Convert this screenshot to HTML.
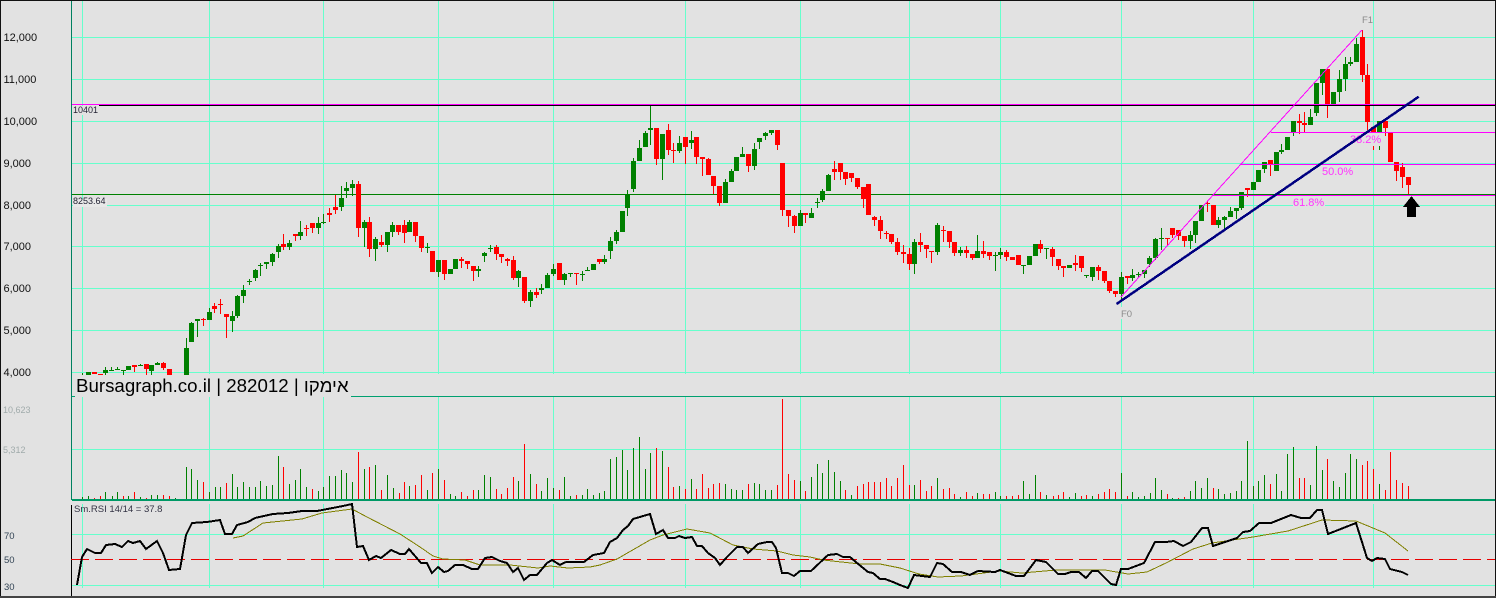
<!DOCTYPE html>
<html><head><meta charset="utf-8"><style>
html,body{margin:0;padding:0;background:#e2e2e2}
svg{display:block}
text{font-family:"Liberation Sans",sans-serif}
</style></head><body>
<svg width="1496" height="598" viewBox="0 0 1496 598" xmlns="http://www.w3.org/2000/svg" shape-rendering="crispEdges">
<defs><clipPath id="p"><rect x="72" y="0" width="1424" height="375"/></clipPath></defs>
<rect width="1496" height="598" fill="#e2e2e2"/>
<!-- grid -->
<path stroke="#66ffcc" stroke-width="1" fill="none" d="M72 37.5H1496M72 79.5H1496M72 121.5H1496M72 163.5H1496M72 205.5H1496M72 246.5H1496M72 288.5H1496M72 330.5H1496M72 372.5H1496M72 449.5H1496M72 534.5H1496M72 585.5H1496
M82.5 1V374M209.5 1V374M323.5 1V374M438.5 1V374M553.5 1V374M685.5 1V374M800.5 1V374M909.5 1V374M1000.5 1V374M1121.5 1V374M1253.5 1V374M1373.5 1V374
M82.5 397V499M209.5 397V499M323.5 397V499M438.5 397V499M553.5 397V499M685.5 397V499M800.5 397V499M909.5 397V499M1000.5 397V499M1121.5 397V499M1253.5 397V499M1373.5 397V499
M82.5 504V588M209.5 504V588M323.5 504V588M438.5 504V588M553.5 504V588M685.5 504V588M800.5 504V588M909.5 504V588M1000.5 504V588M1121.5 504V588M1253.5 504V588M1373.5 504V588"/>
<!-- frame/axes -->
<path stroke="#008060" stroke-width="1" fill="none" d="M71.5 0V500"/>
<path stroke="#000" stroke-width="1" fill="none" d="M71.5 505V596"/>
<path stroke="#00a070" stroke-width="1" fill="none" d="M351 396.5H1496M72 396.5H75"/>
<path stroke="#009966" stroke-width="2" fill="none" d="M72 500H1496"/>
<path stroke="#e80000" stroke-width="1" stroke-dasharray="18 6" fill="none" d="M71 559.5H1496"/>
<!-- green line -->
<path stroke="#008000" stroke-width="1" fill="none" d="M72 194.5H1496"/>
<g clip-path="url(#p)" fill="none">
<!-- green wicks -->
<path stroke="#008000" stroke-width="1" d="M82.5 373V375M105.5 367V375M111.5 367V371M117.5 367V370M123.5 370V375M140.5 364V366M151.5 365V375M157.5 362V365M186.5 338V375M191.5 322V342M197.5 319V337M209.5 308V320M232.5 311V332M237.5 295V318M243.5 285V303M249.5 279V285M255.5 269V281M260.5 263V276M266.5 262V269M272.5 253V266M278.5 244V258M289.5 240V250M300.5 221V240M318.5 217V234M323.5 214V224M341.5 186V211M346.5 182V198M352.5 180V196M364.5 220V247M375.5 237V261M387.5 232V252M392.5 222V237M409.5 220V232
M427.5 243V253M438.5 260V277M478.5 266V277M484.5 252V262M490.5 245V252M518.5 270V287M530.5 290V307M541.5 284V294M547.5 273V288M553.5 264V276M564.5 273V285M570.5 273V277M582.5 271V281M587.5 267V271M604.5 255V264M610.5 237V259M616.5 230V244M627.5 190V216M633.5 158V192M639.5 140V161M645.5 131V147M650.5 105V145M662.5 134V180M679.5 136V153M691.5 131V149M725.5 179V203M731.5 169V182M742.5 147V157M754.5 143V170M759.5 138V149M765.5 132V140M771.5 130V135M800.5 210V226M811.5 208V218M817.5 198V208
M822.5 189V202M828.5 174V191M914.5 239V274M937.5 223V255M960.5 247V256M977.5 235V258M995.5 252V271M1000.5 248V259M1023.5 265V274M1046.5 248V259M1086.5 275V278M1092.5 267V281M1121.5 272V300M1132.5 269V281M1138.5 272V278M1144.5 270V278M1149.5 256V267M1155.5 238V260M1161.5 228V250M1190.5 231V249M1195.5 221V243M1218.5 217V228M1224.5 216V229M1230.5 207V217M1236.5 208V219M1241.5 192V210M1264.5 162V173M1281.5 144V154M1293.5 121V136M1310.5 109V125M1316.5 83V116M1322.5 69V95M1339.5 70V102M1345.5 57V91M1350.5 57V66M1356.5 38V62M1379.5 121V150"/>
<!-- green bodies -->
<path stroke="#008000" stroke-width="5" d="M88.5 372V375M105.5 370V373M111.5 370V371M117.5 369V370M123.5 370V371M128.5 366V370M140.5 365V366M151.5 365V371M157.5 363V365M186.5 348V375M191.5 323V342M197.5 319V321M209.5 312V320M232.5 316V321M237.5 296V316M243.5 290V296M249.5 281V282M255.5 270V278M260.5 265V266M266.5 262V264M272.5 254V262M278.5 246V252M289.5 243V247M300.5 232V236M318.5 223V228M323.5 222V223M341.5 198V207M346.5 188V191M352.5 184V188M364.5 222V228M375.5 239V249M387.5 232V245M392.5 225V232M409.5 222V232
M427.5 247V248M438.5 260V272M450.5 269V274M455.5 259V269M478.5 269V271M484.5 253V256M490.5 248V249M518.5 271V278M530.5 292V301M541.5 288V290M547.5 275V288M553.5 269V274M564.5 274V280M570.5 273V274M582.5 274V275M587.5 270V271M593.5 264V270M604.5 259V262M610.5 241V251M616.5 232V241M622.5 211V232M627.5 194V208M633.5 161V189M639.5 148V161M645.5 133V147M650.5 128V130M662.5 134V159M679.5 143V151M691.5 140V143M725.5 182V203M731.5 171V182M736.5 157V171M742.5 154V157M754.5 149V166M759.5 138V142M765.5 133V136M771.5 130V133M800.5 213V226M811.5 213V218M817.5 202V203
M822.5 191V200M828.5 175V191M914.5 242V264M937.5 225V252M960.5 250V253M977.5 251V258M995.5 255V256M1000.5 252V255M1023.5 265V266M1029.5 256V265M1035.5 244V256M1046.5 248V249M1069.5 265V268M1086.5 275V276M1092.5 267V277M1121.5 277V294M1132.5 275V278M1138.5 274V275M1144.5 270V274M1149.5 258V264M1155.5 239V258M1161.5 238V239M1190.5 235V241M1195.5 221V235M1201.5 205V221M1218.5 220V225M1224.5 217V220M1230.5 211V217M1236.5 208V211M1241.5 192V208M1253.5 182V190M1258.5 170V182M1264.5 162V169M1276.5 152V171M1281.5 150V152M1287.5 137V150M1293.5 121V132M1310.5 117V125M1316.5 83V113M1322.5 69V83M1333.5 92V104M1339.5 79V92M1345.5 64V79M1350.5 62V64M1356.5 44V62M1379.5 121V132"/>
<!-- red wicks -->
<path stroke="#f00" stroke-width="1" d="M134.5 365V372M146.5 364V375M163.5 362V370M203.5 318V326M214.5 303V313M220.5 299V314M226.5 314V338M283.5 234V250M295.5 234V241M306.5 225V236M312.5 223V233M329.5 208V222M335.5 195V214M358.5 181V237M369.5 217V257M381.5 235V247M398.5 225V235M404.5 220V243M415.5 222V242M421.5 236V252
M444.5 260V280M461.5 257V268M467.5 261V269M473.5 266V281M496.5 245V260M501.5 254V263M507.5 258V266M513.5 256V280M524.5 277V303M536.5 288V298M570.5 273V273M576.5 273V285M599.5 259V264M656.5 128V165M668.5 124V155M673.5 143V163M685.5 137V164M696.5 137V164M702.5 157V176M708.5 158V175M713.5 176V194M719.5 186V206M748.5 154V172M777.5 130V150M782.5 163V216M788.5 210V227M794.5 215V233M805.5 213V223
M834.5 161V180M840.5 163V180M845.5 172V185M851.5 173V182M857.5 178V189M863.5 187V208M874.5 216V226M880.5 216V239M886.5 231V239M891.5 234V244M897.5 238V255M903.5 245V263M909.5 248V270M920.5 233V252M926.5 245V258M931.5 251V263M943.5 226V242M949.5 231V248M954.5 242V256M966.5 246V258M972.5 254V260M983.5 241V258M989.5 252V260M1006.5 250V261M1040.5 240V253M1052.5 247V266M1058.5 259V270M1063.5 266V277M1075.5 255V271M1081.5 256V272M1098.5 265V280M1104.5 271V283M1109.5 281V293M1115.5 291V297M1127.5 276V284M1167.5 238V245M1172.5 228V238M1178.5 230V240M1184.5 236V247M1207.5 201V212M1247.5 188V197M1270.5 160V176M1299.5 114V134M1304.5 112V132M1327.5 69V118M1362.5 30V82M1367.5 64V130M1373.5 127V150M1385.5 121V136M1396.5 162V181M1402.5 163V188M1408.5 177V194"/>
<!-- red bodies -->
<path stroke="#f00" stroke-width="5" d="M94.5 372V374M100.5 374V375M134.5 365V367M146.5 364V369M163.5 363V368M169.5 369V375M203.5 319V320M214.5 306V309M220.5 304V305M226.5 314V317M283.5 244V247M295.5 234V236M306.5 228V229M312.5 223V228M329.5 213V215M335.5 207V210M358.5 184V228M369.5 222V249M381.5 242V245M398.5 225V232M404.5 225V233M415.5 222V236M421.5 236V248
M432.5 251V272M444.5 260V274M461.5 259V261M467.5 261V264M473.5 266V271M496.5 247V254M501.5 254V257M507.5 259V261M513.5 260V278M524.5 277V301M536.5 292V295M559.5 263V280M576.5 273V274M599.5 259V262M656.5 128V159M668.5 130V150M673.5 150V151M685.5 137V147M696.5 137V157M702.5 157V159M708.5 159V175M713.5 176V186M719.5 186V203M748.5 154V166M777.5 130V145M782.5 163V210M788.5 210V216M794.5 216V226M805.5 213V215
M834.5 169V172M840.5 163V172M845.5 172V179M851.5 173V178M857.5 178V187M863.5 187V199M868.5 184V215M874.5 217V220M880.5 220V231M886.5 233V234M891.5 234V242M897.5 242V252M903.5 252V254M909.5 254V264M920.5 242V245M926.5 245V249M931.5 251V252M943.5 230V231M949.5 231V242M954.5 242V253M966.5 250V253M972.5 254V258M983.5 251V254M989.5 252V256M1006.5 252V257M1012.5 257V260M1018.5 255V265M1040.5 244V249M1052.5 249V257M1058.5 259V266M1063.5 266V268M1075.5 263V265M1081.5 256V268M1098.5 267V271M1104.5 271V281M1109.5 281V291M1115.5 291V294M1127.5 276V278M1167.5 238V239M1172.5 228V235M1178.5 230V236M1184.5 236V241M1207.5 203V204M1213.5 205V225M1247.5 188V190M1270.5 160V164M1299.5 121V123M1304.5 123V125M1327.5 69V104M1362.5 37V75M1367.5 75V122M1373.5 127V132M1385.5 121V128M1390.5 133V162M1396.5 162V171M1402.5 167V177M1408.5 177V185"/>
</g>
<!-- volume -->
<path fill="none" stroke="#008000" stroke-width="1" d="M82.5 497V499M88.5 496V499M105.5 492V499M112.5 496V499M117.5 492V499M128.5 496V499M140.5 497V499M151.5 495V499M157.5 495V499M175.5 498V499M186.5 467V499M191.5 469V499M197.5 480V499M209.5 492V499M215.5 487V499M220.5 487V499M232.5 474V499M237.5 487V499M243.5 482V499M249.5 487V499M255.5 487V499M260.5 481V499M266.5 486V499M272.5 485V499M278.5 456V499M289.5 484V499M295.5 480V499M300.5 469V499M306.5 487V499M318.5 491V499M323.5 487V499M329.5 476V499M335.5 476V499M341.5 470V499M346.5 473V499M352.5 482V499M364.5 469V499M375.5 465V499M387.5 475V499M393.5 488V499
M409.5 486V499M427.5 490V499M438.5 469V499M450.5 494V499M455.5 496V499M478.5 490V499M484.5 475V499M490.5 477V499M518.5 481V499M530.5 474V499M541.5 491V499M547.5 478V499M553.5 488V499M564.5 477V499M570.5 496V499M582.5 495V499M587.5 489V499M593.5 495V499M599.5 493V499M604.5 491V499M610.5 459V499M616.5 457V499M622.5 450V499M627.5 470V499M633.5 448V499M639.5 437V499M645.5 469V499M650.5 453V499M662.5 451V499M679.5 486V499M691.5 479V499M725.5 484V499M731.5 489V499M736.5 490V499M742.5 490V499M754.5 483V499M759.5 484V499M765.5 490V499M771.5 490V499M800.5 481V499M811.5 477V499M817.5 464V499M822.5 473V499M828.5 460V499M834.5 472V499M840.5 481V499M851.5 495V499
M914.5 485V499M937.5 478V499M960.5 497V499M977.5 493V499M995.5 492V499M1000.5 496V499M1023.5 481V499M1029.5 494V499M1035.5 475V499M1046.5 495V499M1069.5 497V499M1075.5 493V499M1092.5 496V499M1121.5 473V499M1132.5 492V499M1138.5 497V499M1144.5 496V499M1150.5 493V499M1155.5 478V499M1161.5 490V499M1172.5 498V499M1190.5 491V499M1195.5 481V499M1201.5 488V499M1207.5 478V499M1218.5 489V499M1224.5 494V499M1230.5 493V499M1236.5 491V499M1241.5 481V499M1247.5 441V499M1253.5 486V499M1258.5 481V499M1264.5 475V499M1276.5 474V499M1281.5 491V499M1287.5 454V499M1293.5 447V499M1310.5 485V499M1316.5 446V499M1322.5 470V499M1333.5 481V499M1339.5 487V499M1345.5 473V499M1350.5 454V499M1356.5 459V499M1379.5 484V499"/>
<path fill="none" stroke="#f00" stroke-width="1" d="M94.5 498V499M100.5 496V499M123.5 496V499M134.5 492V499M146.5 498V499M163.5 495V499M169.5 496V499M203.5 482V499M226.5 483V499M283.5 467V499M312.5 489V499M358.5 452V499M369.5 467V499M381.5 490V499M399.5 493V499
M404.5 482V499M415.5 485V499M421.5 475V499M432.5 473V499M444.5 480V499M461.5 492V499M467.5 496V499M473.5 490V499M496.5 489V499M501.5 494V499M507.5 488V499M513.5 477V499M524.5 444V499M536.5 484V499M559.5 490V499M576.5 495V499M656.5 448V499M668.5 467V499M673.5 487V499M685.5 489V499M696.5 489V499M702.5 474V499M708.5 488V499M713.5 484V499M719.5 483V499M748.5 484V499M777.5 485V499M782.5 399V499M788.5 474V499M794.5 480V499M805.5 491V499M845.5 490V499M857.5 486V499M863.5 484V499M868.5 482V499M874.5 482V499M880.5 482V499M886.5 478V499M891.5 486V499M897.5 478V499
M903.5 465V499M909.5 485V499M920.5 480V499M926.5 491V499M931.5 486V499M943.5 489V499M949.5 488V499M954.5 494V499M966.5 492V499M972.5 496V499M983.5 494V499M989.5 494V499M1006.5 496V499M1012.5 496V499M1018.5 495V499M1040.5 492V499M1053.5 496V499M1058.5 495V499M1063.5 492V499M1081.5 496V499M1086.5 495V499M1098.5 494V499M1104.5 492V499M1109.5 489V499M1115.5 492V499M1127.5 496V499M1167.5 494V499M1178.5 498V499M1184.5 497V499M1213.5 488V499M1270.5 484V499M1299.5 478V499M1304.5 478V499M1327.5 459V499M1362.5 465V499M1367.5 461V499M1373.5 469V499M1385.5 490V499M1390.5 452V499M1396.5 480V499M1402.5 483V499M1408.5 486V499"/>
<!-- RSI -->
<polyline fill="none" stroke="#808000" stroke-width="1" points="233,538 243,536 263,523 302,519 322,513 352,509 367,517 400,534 420,547 433,556 443,559 465,560 480,565 510,565 538,568 550,566 568,568 590,567 600,565 617,559 650,540 663,535 687,529 710,533 733,545 753,549 777,551 793,555 810,557 823,560 860,564 880,564 900,568 919,574 938,577 961,576 999,571 1022,573 1056,570 1105,570 1128,574 1147,572 1166,563 1193,549 1212,543 1253,537 1288,531 1322,520 1356,521 1385,533 1408,551"/>
<polyline fill="none" stroke="#000" stroke-width="2" points="77,585 82,557 87,549 95,553 101,553 106,545 115,544 122,547 128,541 133,543 140,541 146,549 157,541 163,553 169,570 180,569 186,535 192,523 207,522 220,520 225,534 232,534 237,525 248,522 255,518 273,514 288,513 302,511 317,511 343,506 352,504 357,547 363,546 369,560 376,556 381,558 391,550 400,554 405,554 409,549 421,563 427,563 432,573 438,567 444,572 448,571 455,565 463,565 472,569 478,569 485,558 492,557 500,561 507,563 513,572 518,568 524,580 530,575 537,575 547,563 552,560 560,565 566,562 584,562 593,555 604,553 610,542 617,538 623,530 628,526 633,519 650,514 656,534 663,530 668,538 675,538 679,536 685,538 692,537 697,546 702,546 708,553 715,558 720,565 727,557 737,547 743,547 748,553 758,544 767,542 772,542 776,548 782,573 788,573 794,576 800,571 811,571 828,555 837,554 843,557 850,557 857,563 868,572 873,573 880,579 885,579 893,582 900,585 908,588 914,575 930,577 937,563 943,564 952,572 961,572 970,575 978,571 995,572 1000,570 1016,576 1024,576 1036,560 1046,562 1058,574 1065,574 1071,572 1079,572 1086,578 1092,571 1098,571 1111,584 1116,585 1121,569 1128,569 1144,563 1155,542 1166,542 1174,541 1183,546 1191,542 1202,528 1208,528 1213,546 1237,538 1243,532 1250,531 1259,523 1271,523 1291,515 1301,518 1310,518 1317,510 1322,510 1328,534 1356,523 1367,558 1372,561 1377,558 1385,559 1390,569 1402,572 1408,575"/>
<!-- resistance & fib lines -->
<path fill="none" stroke="#f0f" stroke-width="1" d="M72 104.5H1496M1271 132.5H1496M1241 164.5H1496M1213 195.5H1496"/>
<path fill="none" stroke="#000" stroke-width="1" d="M99 105.5H1496"/>
<line x1="1121" y1="297" x2="1362" y2="30" stroke="#f0f" stroke-width="1"/>
<!-- labels with backgrounds -->
<rect x="1350" y="133" width="31" height="13" fill="#e2e2e2"/>
<rect x="1322" y="165" width="32" height="12" fill="#e2e2e2"/>
<rect x="1293" y="196" width="32" height="12" fill="#e2e2e2"/>
<rect x="73" y="199" width="34" height="8" fill="#e8e8e8"/>
<rect x="73" y="106" width="26" height="9" fill="#e2e2e2"/>
<rect x="1121" y="307" width="13" height="12" fill="#e2e2e2"/>
<text x="1350" y="143" font-size="11" fill="#ff33ff">38.2%</text>
<text x="1322" y="175" font-size="11" fill="#ff33ff">50.0%</text>
<text x="1293" y="206" font-size="11" fill="#ff33ff">61.8%</text>
<text x="1362" y="23" font-size="9.5" fill="#8a8a8a">F1</text>
<text x="1121" y="317" font-size="9.5" fill="#8a8a8a">F0</text>
<text x="73" y="113" font-size="9" fill="#223">10401</text>
<text x="73" y="204" font-size="9" fill="#223">8253.64</text>
<!-- navy trendline -->
<line x1="1116.5" y1="304" x2="1418.7" y2="96.7" stroke="#000080" stroke-width="2.5"/>
<!-- arrow -->
<path fill="#000" d="M1411.5 196L1420 207H1416V217H1407V207H1403Z"/>
<!-- axis labels -->
<g font-size="11" fill="#111">
<text x="3.5" y="41">12,000</text>
<text x="3.5" y="83">11,000</text>
<text x="3.5" y="125">10,000</text>
<text x="3.5" y="167">9,000</text>
<text x="3.5" y="209">8,000</text>
<text x="3.5" y="250">7,000</text>
<text x="3.5" y="292">6,000</text>
<text x="3.5" y="334">5,000</text>
<text x="3.5" y="376">4,000</text>
</g>
<text x="3" y="413" font-size="9" fill="#a0abab">10,623</text>
<text x="3" y="453" font-size="9" fill="#a0abab">5,312</text>
<text x="4" y="539" font-size="9.5" fill="#345">70</text>
<text x="4" y="563" font-size="9.5" fill="#345">50</text>
<text x="4" y="590" font-size="9.5" fill="#345">30</text>
<text x="74" y="512" font-size="9.5" fill="#334">Sm.RSI 14/14 = 37.8</text>
<rect x="73" y="375" width="278" height="21" fill="#e2e2e2"/>
<text x="76" y="392" font-size="18.7" fill="#000">Bursagraph.co.il | 282012 | אימקו</text>
<!-- frame -->
<path fill="none" stroke="#111" stroke-width="1" d="M0.5 0V598M0 0.5H1496M1495.5 0V598"/>
<path fill="none" stroke="#444" stroke-width="2" d="M0 597H1496"/>
</svg>
</body></html>
